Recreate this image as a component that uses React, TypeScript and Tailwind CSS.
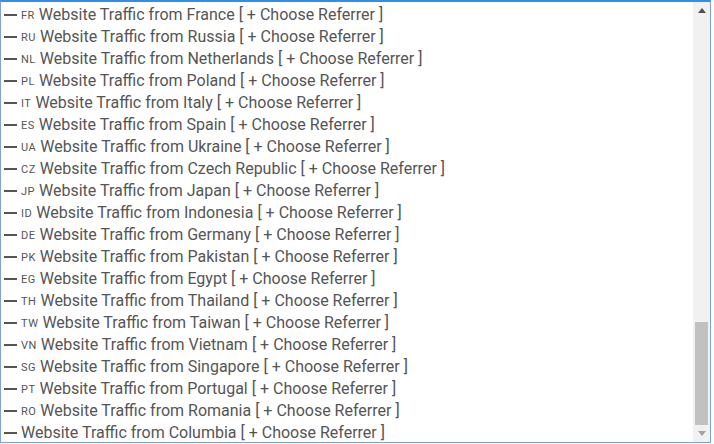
const rows: [string, string][] = [
  ["FR", "France"],
  ["RU", "Russia"],
  ["NL", "Netherlands"],
  ["PL", "Poland"],
  ["IT", "Italy"],
  ["ES", "Spain"],
  ["UA", "Ukraine"],
  ["CZ", "Czech Republic"],
  ["JP", "Japan"],
  ["ID", "Indonesia"],
  ["DE", "Germany"],
  ["PK", "Pakistan"],
  ["EG", "Egypt"],
  ["TH", "Thailand"],
  ["TW", "Taiwan"],
  ["VN", "Vietnam"],
  ["SG", "Singapore"],
  ["PT", "Portugal"],
  ["RO", "Romania"],
  ["", "Columbia"],
];

export default function App() {
  return (
    <div className="h-[444px] w-[714px] bg-white">
      <div
        className="flex h-[443px] w-[711px] overflow-hidden border border-t-2 border-[#7f9fd8] border-t-[#2f8ef0] bg-white"
        style={{ fontFamily: 'Roboto, "Liberation Sans", sans-serif' }}
      >
        <ul className="flex-1 overflow-hidden pt-[2px] text-[16px] text-[#555]">
          {rows.map(([code, name]) => (
            <li key={name} className="flex h-[22px] items-center whitespace-nowrap pl-[3px]">
              <span className="mr-[4px] inline-block h-[2px] w-[13px] bg-[#555]" />
              {code && (
                <span className="mr-[4px] text-[11px] leading-none tracking-[0.5px]">{code}</span>
              )}
              <span>
                Website Traffic from {name} [ + Choose Referrer ]
              </span>
            </li>
          ))}
        </ul>
        <div className="flex w-[17px] shrink-0 flex-col bg-[#f1f1f1]">
          <div className="flex h-[17px] items-center justify-center">
            <svg width="8" height="5" viewBox="0 0 8 5">
              <path d="M0 5 L4 0 L8 5 Z" fill="#505050" />
            </svg>
          </div>
          <div className="flex-1" />
          <div className="mx-auto h-[103px] w-[13px] bg-[#c1c1c1]" />
          <div className="flex h-[17px] items-center justify-center">
            <svg width="8" height="5" viewBox="0 0 8 5">
              <path d="M0 0 L8 0 L4 5 Z" fill="#a3a3a3" />
            </svg>
          </div>
        </div>
      </div>
    </div>
  );
}
